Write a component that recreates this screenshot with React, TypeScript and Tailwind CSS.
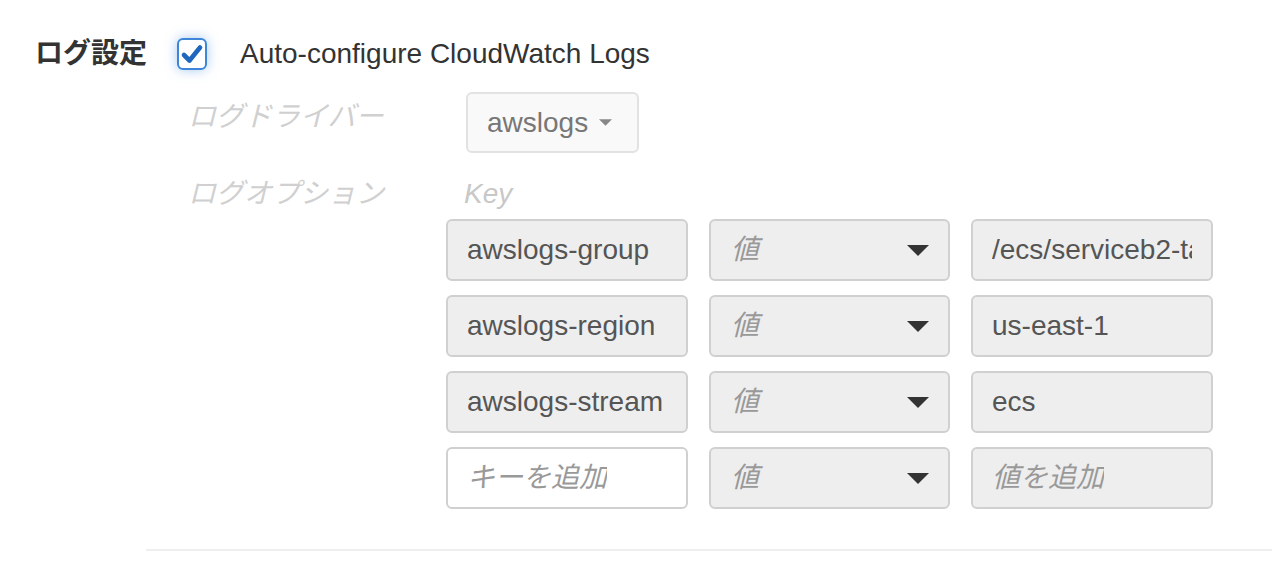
const FONT = "font-['Liberation_Sans','Noto_Sans_CJK_JP',sans-serif]";

type Row = { key: string; value: string; keyPlaceholder?: boolean; valuePlaceholder?: boolean };

const rows: Row[] = [
  { key: "awslogs-group", value: "/ecs/serviceb2-task" },
  { key: "awslogs-region", value: "us-east-1" },
  { key: "awslogs-stream", value: "ecs" },
  { key: "キーを追加", value: "値を追加", keyPlaceholder: true, valuePlaceholder: true },
];

function Caret({ className }: { className: string }) {
  return (
    <svg viewBox="0 0 22 11" className={className} fill="currentColor">
      <polygon points="0,0 22,0 11,11" />
    </svg>
  );
}

function OptionRow({ row }: { row: Row }) {
  return (
    <div className="grid grid-cols-[242px_241px_242px] gap-x-[21px] h-[62px]">
      {/* Key */}
      <div
        className={`flex items-center rounded-[6px] border-2 border-[#d0d0d0] px-[19px] ${
          row.keyPlaceholder ? "bg-white" : "bg-[#eeeeee]"
        }`}
      >
        <div className="overflow-hidden whitespace-nowrap">
          {row.keyPlaceholder ? (
            <span className="italic text-[#999]">{row.key}</span>
          ) : (
            <span className="text-[#555]">{row.key}</span>
          )}
        </div>
      </div>

      {/* Value type select */}
      <div className="flex items-center justify-between rounded-[6px] border-2 border-[#d0d0d0] bg-[#eeeeee] pl-[20px] pr-[19px]">
        <span className="italic text-[#999]">値</span>
        <Caret className="w-[22px] h-[11px] text-[#333]" />
      </div>

      {/* Value */}
      <div className="flex items-center rounded-[6px] border-2 border-[#d0d0d0] bg-[#eeeeee] px-[19px]">
        <div className="overflow-hidden whitespace-nowrap">
          {row.valuePlaceholder ? (
            <span className="italic text-[#999]">{row.value}</span>
          ) : (
            <span className="text-[#555]">{row.value}</span>
          )}
        </div>
      </div>
    </div>
  );
}

export default function App() {
  return (
    <div className={`w-[1272px] h-[570px] bg-white overflow-hidden text-[28px] ${FONT}`}>
      {/* Header */}
      <div className="flex items-center h-[32px] mt-[38px] pl-[35px]">
        <span className="w-[142px] font-bold text-[#333]">ログ設定</span>
        <div className="w-[30px] h-[32px] rounded-[6px] border-2 border-[#3d86d8] bg-white flex items-center justify-center shadow-[0_0_12px_rgba(80,150,230,0.5)]">
          <svg viewBox="0 0 24 24" className="w-[24px] h-[24px]" fill="none" stroke="#1f66bf" strokeWidth="4.6" strokeLinecap="round" strokeLinejoin="round">
            <polyline points="4,13 9.5,18.5 20,5.5" />
          </svg>
        </div>
        <span className="ml-[33px] text-[#333]">Auto-configure CloudWatch Logs</span>
      </div>

      {/* Log driver */}
      <div className="flex items-start mt-[22px]">
        <div className="ml-[188px] w-[258px] pt-[5px] leading-[40px] italic text-[#d0d0d0]">ログドライバー</div>
        <div className="ml-[20px] w-[173px] h-[61px] rounded-[6px] border-2 border-[#e2e2e2] bg-[#f9f9f9] pl-[19px] flex items-center text-[#777]">
          <span>awslogs</span>
          <Caret className="ml-[11px] w-[13px] h-[7px] text-[#888]" />
        </div>
      </div>

      {/* Log options */}
      <div className="flex items-start mt-[21px]">
        <div className="ml-[188px] w-[258px] leading-[40px] italic text-[#d0d0d0]">ログオプション</div>
        <div className="flex flex-col">
          <div className="pl-[18px] leading-[40px] italic text-[#c8c8c8]">Key</div>
          <div className="mt-[5px] flex flex-col gap-y-[14px]">
            {rows.map((r) => (
              <OptionRow key={r.key} row={r} />
            ))}
          </div>
        </div>
      </div>

      {/* Divider */}
      <div className="ml-[146px] mt-[40px] h-[2px] bg-[#eeeeee]" />
    </div>
  );
}
